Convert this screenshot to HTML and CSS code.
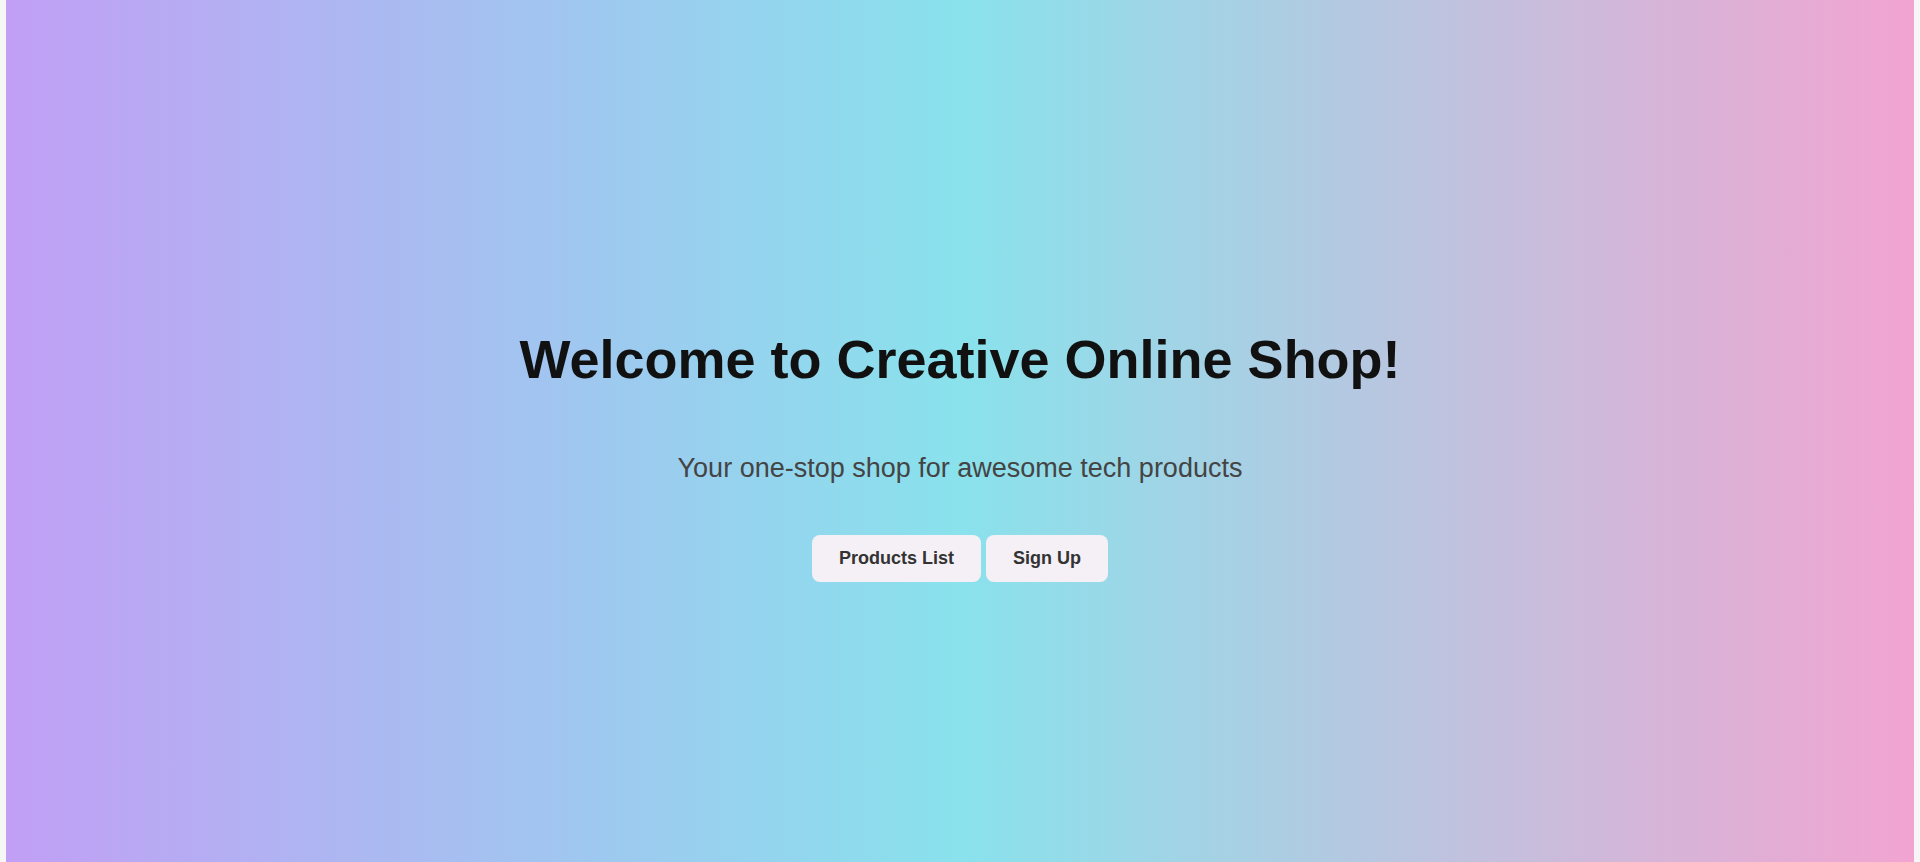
FILE: index.html
```html
<!DOCTYPE html>
<html lang="en">
<head>
<meta charset="utf-8">
<title>Creative Online Shop</title>
<link rel="stylesheet" href="styles.css">
</head>
<body>
<main class="hero">
  <h1 class="hero-title">Welcome to Creative Online Shop!</h1>
  <p class="hero-subtitle">Your one-stop shop for awesome tech products</p>
  <div class="hero-actions">
    <a class="btn" href="#">Products List</a>
    <a class="btn" href="#">Sign Up</a>
  </div>
</main>
</body>
</html>
```

FILE: styles.css
```css
html, body {
  margin: 0;
  height: 100%;
}
body {
  background: #f6f6f6;
  padding: 0 6px;
  box-sizing: border-box;
  font-family: "Liberation Sans", Arial, sans-serif;
  overflow: hidden;
}
.hero {
  height: 862px;
  background: linear-gradient(to right, #c19ff5 0%, #89e2ec 50%, #f2a4d1 100%);
  display: flex;
  flex-direction: column;
  align-items: center;
  padding-top: 326px;
  box-sizing: border-box;
}
.hero-title {
  margin: 0;
  font-size: 54px;
  line-height: 66px;
  font-weight: 700;
  color: #111;
}
.hero-subtitle {
  margin: 61px 0 0;
  font-size: 27px;
  line-height: 30px;
  color: #444;
}
.hero-actions {
  margin-top: 52px;
  display: flex;
  gap: 5px;
}
.btn {
  display: block;
  height: 47px;
  line-height: 47px;
  padding: 0 27px;
  background: #f4f0f6;
  border-radius: 8px;
  color: #333;
  font-size: 18px;
  font-weight: 700;
  text-decoration: none;
}
```
